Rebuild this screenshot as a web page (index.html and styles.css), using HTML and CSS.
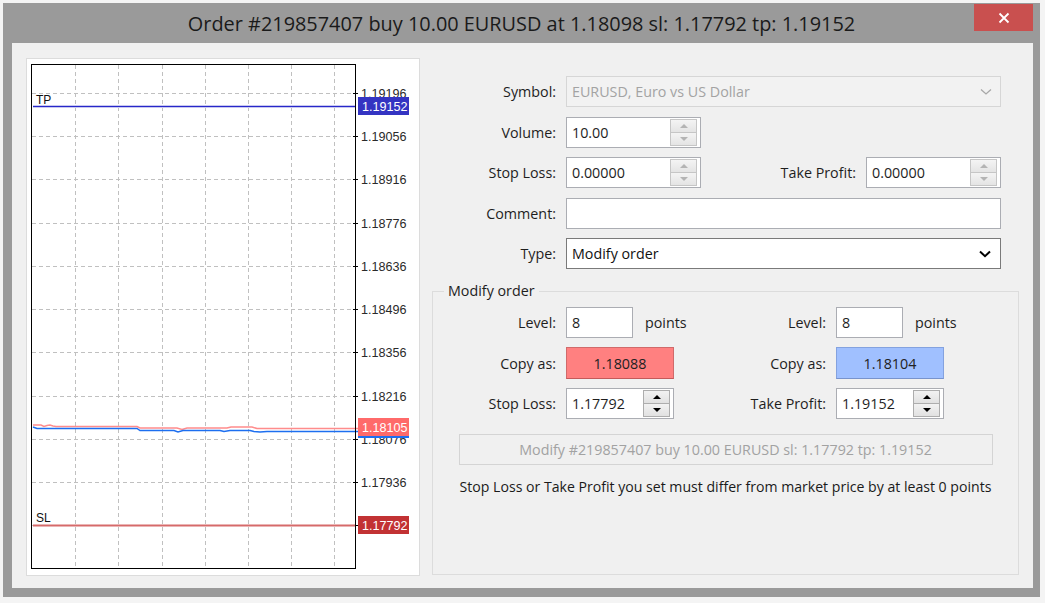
FILE: index.html
```html
<!DOCTYPE html>
<html>
<head>
<meta charset="utf-8">
<link rel="stylesheet" href="styles.css">
</head>
<body>
<div class="desk">
  <div class="window">
    <div class="titlebar">
      <span class="title">Order #219857407 buy 10.00 EURUSD at 1.18098 sl: 1.17792 tp: 1.19152</span>
      <div class="close">
        <svg width="12" height="12" viewBox="0 0 12 12"><path d="M1.5 1.5 L10.5 10.5 M10.5 1.5 L1.5 10.5" stroke="#fff" stroke-width="1.8" fill="none"/></svg>
      </div>
    </div>
    <div class="content">
      <div class="chart-panel">
        <svg class="chart" width="392" height="516" viewBox="0 0 392 516">
          <rect x="0" y="0" width="392" height="516" fill="#fff"/>
          <g stroke="#c0c0c0" stroke-width="1" stroke-dasharray="4 3" fill="none">
            <path d="M48.5 6 V509 M91.5 6 V509 M135.5 6 V509 M178.5 6 V509 M221.5 6 V509 M264.5 6 V509 M307.5 6 V509"/>
            <path d="M5 34.5 H328 M5 77.5 H328 M5 120.5 H328 M5 164.5 H328 M5 207.5 H328 M5 250.5 H328 M5 293.5 H328 M5 337.5 H328 M5 380.5 H328 M5 423.5 H328 M5 466.5 H328"/>
          </g>
          <g stroke="#000" stroke-width="1">
            <path d="M326 34.5 H331 M326 77.5 H331 M326 120.5 H331 M326 164.5 H331 M326 207.5 H331 M326 250.5 H331 M326 293.5 H331 M326 337.5 H331 M326 380.5 H331 M326 423.5 H331 M326 466.5 H331"/>
          </g>
          <g class="axis" fill="#2a2a2a">
            <text x="334" y="39">1.19196</text>
            <text x="334" y="82">1.19056</text>
            <text x="334" y="125">1.18916</text>
            <text x="334" y="169">1.18776</text>
            <text x="334" y="212">1.18636</text>
            <text x="334" y="255">1.18496</text>
            <text x="334" y="298">1.18356</text>
            <text x="334" y="342">1.18216</text>
            <text x="334" y="385">1.18076</text>
            <text x="334" y="428">1.17936</text>
          </g>
          <!-- TP -->
          <path d="M6 47.5 H328" stroke="#c8c8f0" stroke-width="3"/>
          <path d="M6 47.5 H328" stroke="#2727c9" stroke-width="1.2"/>
          <text class="tag" x="9" y="45" fill="#111">TP</text>
          <rect x="331" y="38" width="51" height="18" fill="#3434c2"/>
          <text class="axis" x="335" y="52" fill="#fff">1.19152</text>
          <!-- price lines -->
          <path d="M6 366 L14 366 L17 367.5 L20 366.5 L23 366 L26 367 L29 367.5 L110 367.5 L113 369 L150 369 L155 370.5 L160 369 L200 369 L204 368 L225 368 L230 369.5 L331 369.5" stroke="#ff8c8c" stroke-width="1.5" fill="none"/>
          <path d="M6 368 L10 369.5 L110 369.5 L113 371.5 L147 371.5 L151 373 L156 371.5 L193 371.5 L197 372.5 L203 371.5 L223 371.5 L227 372.5 L233 373 L240 372.5 L331 372.5" stroke="#1d6ff0" stroke-width="1.5" fill="none"/>
          <rect x="331" y="359" width="51" height="18" fill="#ff6a6a"/>
          <rect x="331" y="377" width="51" height="2" fill="#1d6ff0"/>
          <text class="axis" x="335" y="373" fill="#fff">1.18105</text>
          <!-- SL -->
          <path d="M6 466.5 H328" stroke="#d66a6a" stroke-width="2"/>
          <text class="tag" x="9" y="463" fill="#111">SL</text>
          <rect x="331" y="457" width="51" height="18" fill="#c23234"/>
          <text class="axis" x="335" y="471" fill="#fff">1.17792</text>
          <!-- frame -->
          <rect x="4.5" y="5.5" width="324" height="504" fill="none" stroke="#000" stroke-width="1"/>
        </svg>
      </div>
      <div class="form">
        <div class="rows">
          <div class="row">
            <span class="lbl">Symbol:</span>
            <div class="combo disabled"><span class="val">EURUSD, Euro vs US Dollar</span>
              <svg width="12" height="8" viewBox="0 0 12 8"><path d="M1 1.5 L6 6 L11 1.5" stroke="#a8a8a8" stroke-width="1.3" fill="none"/></svg>
            </div>
          </div>
          <div class="row">
            <span class="lbl">Volume:</span>
            <div class="spin wide"><span class="val">10.00</span>
              <div class="btns light"><span class="b up"></span><span class="b down"></span></div>
            </div>
          </div>
          <div class="row">
            <span class="lbl">Stop Loss:</span>
            <div class="spin wide"><span class="val">0.00000</span>
              <div class="btns light"><span class="b up"></span><span class="b down"></span></div>
            </div>
            <span class="lbl flex">Take Profit:</span>
            <div class="spin wide"><span class="val">0.00000</span>
              <div class="btns light"><span class="b up"></span><span class="b down"></span></div>
            </div>
          </div>
          <div class="row">
            <span class="lbl">Comment:</span>
            <div class="text-input full"></div>
          </div>
          <div class="row">
            <span class="lbl">Type:</span>
            <div class="combo active"><span class="val">Modify order</span>
              <svg width="12" height="8" viewBox="0 0 12 8"><path d="M1 1.5 L6 6.2 L11 1.5" stroke="#000" stroke-width="2" fill="none"/></svg>
            </div>
          </div>
        </div>
        <fieldset class="group">
          <legend>Modify order</legend>
          <div class="gcols">
            <div class="gcol left">
              <div class="grow"><span class="glbl">Level:</span><div class="text-input level"><span class="val">8</span></div><span class="pts">points</span></div>
              <div class="grow"><span class="glbl">Copy as:</span><div class="copy red">1.18088</div></div>
              <div class="grow"><span class="glbl">Stop Loss:</span>
                <div class="spin narrow"><span class="val">1.17792</span>
                  <div class="btns dark"><span class="b up"></span><span class="b down"></span></div>
                </div>
              </div>
            </div>
            <div class="gcol right">
              <div class="grow"><span class="glbl">Level:</span><div class="text-input level"><span class="val">8</span></div><span class="pts">points</span></div>
              <div class="grow"><span class="glbl">Copy as:</span><div class="copy blue">1.18104</div></div>
              <div class="grow"><span class="glbl">Take Profit:</span>
                <div class="spin narrow"><span class="val">1.19152</span>
                  <div class="btns dark"><span class="b up"></span><span class="b down"></span></div>
                </div>
              </div>
            </div>
          </div>
          <div class="modify">Modify #219857407 buy 10.00 EURUSD sl: 1.17792 tp: 1.19152</div>
          <p class="msg">Stop Loss or Take Profit you set must differ from market price by at least 0 points</p>
        </fieldset>
      </div>
    </div>
  </div>
</div>
</body>
</html>
```
FILE: styles.css
```css
* { box-sizing: border-box; }

body {
  margin: 0;
  width: 1045px;
  height: 603px;
  overflow: hidden;
  background: #f4f4f4;
  font-family: "Open Sans", "Liberation Sans", Arial, sans-serif;
  color: #1e1e1e;
}

.desk {
  padding: 3px 0 0 3px;
}

.window {
  width: 1037px;
  height: 594px;
  background: #9a9a9a;
  display: flex;
  flex-direction: column;
  position: relative;
}

.titlebar {
  height: 40px;
  display: flex;
  align-items: center;
  justify-content: center;
}

.title {
  font-size: 19.9px;
  color: #1a1a1a;
  margin-top: 0;
}

.close {
  position: absolute;
  left: 971px;
  top: 1px;
  width: 59px;
  height: 27px;
  background: #c9504f;
  display: flex;
  align-items: center;
  justify-content: center;
}

.close svg { display: block; }

.content {
  flex: 1;
  margin: 0 7px 9px 9px;
  background: #f0f0f0;
  display: flex;
  align-items: flex-start;
  padding: 15px 0 0 14px;
}

.chart-panel {
  width: 394px;
  height: 518px;
  background: #fff;
  border: 1px solid #dcdcdc;
}

.chart { display: block; }

.chart .axis,
.chart text.axis {
  font-family: "Liberation Sans", Arial, sans-serif;
  font-size: 12.6px;
}

.chart .tag {
  font-family: "Liberation Sans", Arial, sans-serif;
  font-size: 12px;
}

.form {
  margin-left: 12px;
  width: 587px;
  padding-top: 18px;
  display: flex;
  flex-direction: column;
  font-size: 14.3px;
}

.rows {
  display: flex;
  flex-direction: column;
  gap: 9.5px;
  width: 569px;
}

.row {
  display: flex;
  align-items: center;
  height: 31px;
}

.lbl {
  width: 134px;
  padding-right: 10px;
  text-align: right;
  color: #1e1e1e;
}

.lbl.flex {
  width: auto;
  flex: 1;
}

.val {
  flex: 1;
  white-space: nowrap;
}

.combo {
  width: 435px;
  height: 31px;
  display: flex;
  align-items: center;
  padding: 0 8px 0 5px;
}

.combo svg { display: block; }

.combo.disabled {
  background: #f2f2f2;
  border: 1px solid #d6d6d6;
  color: #a3a3a3;
}

.combo.active {
  background: #fff;
  border: 1px solid #7a7a7a;
  color: #111;
  padding-right: 9px;
}

.text-input {
  height: 31px;
  background: #fff;
  border: 1px solid #abadb3;
  display: flex;
  align-items: center;
  padding-left: 5px;
}

.text-input.full { width: 435px; }
.text-input.level { width: 67px; }

.spin {
  height: 31px;
  background: #fff;
  border: 1px solid #abadb3;
  display: flex;
  align-items: center;
  padding: 0 3px 0 5px;
}

.spin.wide { width: 135px; }
.spin.narrow { width: 108px; }

.btns {
  width: 27px;
  height: 27px;
  display: flex;
  flex-direction: column;
}

.btns .b {
  flex: 1;
  display: flex;
  align-items: center;
  justify-content: center;
  border: 1px solid #c6c6c6;
  background: linear-gradient(#f4f4f4, #e4e4e4);
}

.btns .b.down { border-top: none; }

.btns .b::after {
  content: "";
  width: 0;
  height: 0;
  border-left: 4px solid transparent;
  border-right: 4px solid transparent;
}

.btns .b.up::after { border-bottom: 4px solid #b4b4b4; }
.btns .b.down::after { border-top: 4px solid #b4b4b4; }

.btns.dark .b { border-color: #adadad; background: linear-gradient(#f2f2f2, #e1e1e1); }
.btns.dark .b.down { border-top: none; }
.btns.dark .b.up::after { border-bottom-color: #000; }
.btns.dark .b.down::after { border-top-color: #000; }

.group {
  margin: 13px 0 0 0;
  padding: 0;
  border: 1px solid #dcdcdc;
  height: 293px;
  min-width: 0;
}

.group legend {
  margin-left: 11px;
  padding: 0 4px;
  line-height: 18px;
  font-size: 14.3px;
  color: #1e1e1e;
}

.gcols {
  display: flex;
  margin-top: 7px;
}

.gcol {
  display: flex;
  flex-direction: column;
  gap: 9.5px;
}

.gcol.left { width: 270px; }

.grow {
  display: flex;
  align-items: center;
  height: 31px;
}

.glbl {
  width: 133px;
  padding-right: 10px;
  text-align: right;
}

.pts {
  margin-left: 12px;
}

.copy {
  width: 108px;
  height: 32px;
  display: flex;
  align-items: center;
  justify-content: center;
  color: #222;
}

.copy.red {
  background: #ff8080;
  border: 1px solid #d06a6a;
  border-bottom-color: #c45a5a;
}

.copy.blue {
  background: #a0c0ff;
  border: 1px solid #84a2df;
  border-bottom-color: #7893cc;
}

.modify {
  width: 534px;
  height: 31px;
  margin: 15px auto 0;
  border: 1px solid #d4d4d4;
  background: #f0f0f0;
  color: #a2a2a2;
  display: flex;
  align-items: center;
  justify-content: center;
}

.msg {
  margin: 13px 0 0;
  line-height: 18px;
  text-align: center;
  color: #1a1a1a;
  font-size: 14.1px;
}
```
